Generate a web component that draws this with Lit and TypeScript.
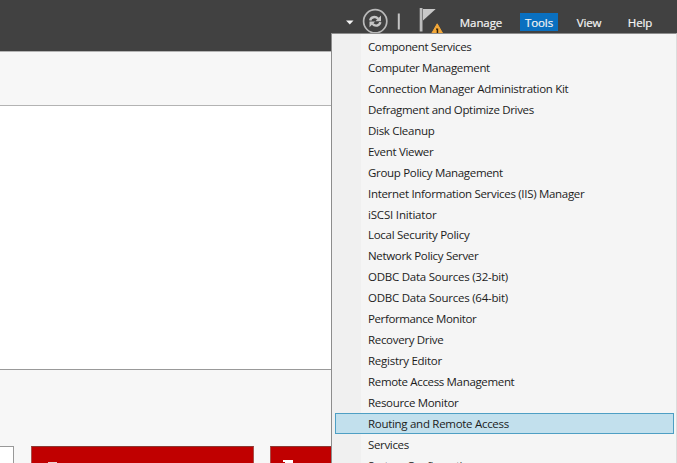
import { LitElement, html, css } from "lit";
import { customElement } from "lit/decorators.js";
import { classMap } from "lit/directives/class-map.js";

// Label and the width in pixels its text is fitted to.
const TOOLS: [string, number][] = [
  ["Component Services", 103],
  ["Computer Management", 121.5],
  ["Connection Manager Administration Kit", 200],
  ["Defragment and Optimize Drives", 165.5],
  ["Disk Cleanup", 66],
  ["Event Viewer", 65],
  ["Group Policy Management", 134.5],
  ["Internet Information Services (IIS) Manager", 216],
  ["iSCSI Initiator", 68],
  ["Local Security Policy", 101],
  ["Network Policy Server", 110],
  ["ODBC Data Sources (32-bit)", 139.5],
  ["ODBC Data Sources (64-bit)", 139.5],
  ["Performance Monitor", 108],
  ["Recovery Drive", 75],
  ["Registry Editor", 73.5],
  ["Remote Access Management", 146],
  ["Resource Monitor", 90],
  ["Routing and Remote Access", 140.5],
  ["Services", 40.5],
  ["System Configuration", 107],
];
const SELECTED = "Routing and Remote Access";

@customElement("app-root")
export class AppRoot extends LitElement {
  static styles = css`
    :host {
      display: block;
      position: relative;
      width: 677px;
      height: 463px;
      overflow: hidden;
      background: #f7f7f7;
      font: 11.5px/21px "Open Sans", "Noto Sans", sans-serif;
      color: #1c1c1c;
    }
    * { box-sizing: border-box; }
    .page { display: flex; flex-direction: column; height: 463px; }
    .bar {
      flex: none;
      height: 52px;
      background: #414141;
      border-bottom: 1px solid #b4b4b4;
      display: flex;
      align-items: flex-start;
      color: #f4f4f4;
    }
    .icons { display: block; margin-left: 340px; flex: none; }
    .nav { display: flex; padding-top: 13px; margin-left: 3px; letter-spacing: -0.1px; }
    .nav span {
      height: 18px;
      line-height: 19px;
      text-align: center;
      -webkit-text-stroke: 0.2px #f4f4f4;
    }
    .manage { width: 56px; }
    .tools { width: 38px; margin-left: 11px; background: #0a70c0; }
    .view { width: 40px; margin-left: 11px; }
    .help { width: 40px; margin-left: 11px; }
    .panel {
      flex: none;
      height: 265px;
      margin-top: 53px;
      background: #fff;
      border-top: 1px solid #b3b3b3;
      border-bottom: 1px solid #999;
    }
    .cards { display: flex; margin-top: 76px; height: 17px; }
    .card { flex: none; border: 1px solid #999; border-bottom: 0; background: #fff; }
    .plain { width: 14px; border-left: 0; }
    .red { background: #c00000; border-color: #a8504a; border-top-color: #8a3a34; }
    .wide { width: 223px; margin-left: 17px; }
    .next { width: 223px; margin-left: 16px; }
    .red svg { display: block; }
    .menu {
      position: absolute;
      left: 331px;
      top: 33px;
      width: 346px;
      height: 440px;
      padding: 2px 2px 0 3px;
      border: 1px solid #8d8d8d;
      border-right-color: #dcdcdc;
      background: linear-gradient(90deg, #f0f0f0 29px, #f5f5f5 29px);
    }
    .item {
      height: 20.95px;
      line-height: 19px;
      padding-left: 32px;
      border: 1px solid transparent;
      white-space: nowrap;
    }
    .item span { display: inline-block; }
    .on { background: #c2e0ed; border-color: #4e9fc4; }
  `;

  async firstUpdated() {
    await document.fonts.ready;
    this.renderRoot.querySelectorAll<HTMLElement>(".item span").forEach((el, i) => {
      const [text, width] = TOOLS[i];
      const gap = (width + 0.7 - el.getBoundingClientRect().width) / (text.length - 1);
      el.style.letterSpacing = `${gap}px`;
    });
  }

  render() {
    return html`
      <div class="page">
        <div class="bar">
          <svg class="icons" width="110" height="33" viewBox="340 0 110 33">
            <path d="M346 20.5h7.5l-3.75 4z" fill="#f4f4f4" />
            <circle cx="375.2" cy="21.3" r="11.6" fill="none" stroke="#b9b9b9" stroke-width="1.7" />
            <g fill="none" stroke="#c6c6c6" stroke-width="2.4">
              <path d="M370.2 20.5c.5-3.4 5-4.8 8-1.6" />
              <path d="M380.3 22.2c-.5 3.4-5 4.8-8 1.6" />
            </g>
            <path d="M381 15.5v5.7h-5.6zM369.5 27.2v-5.7h5.6z" fill="#c6c6c6" />
            <path d="M397.8 13.5h2v16h-2z" fill="#c4c4c4" />
            <path d="M419.7 8h2.8v23.5h-2.8z" fill="#bdbdbd" />
            <path d="M423 9h12.7L423 20.4z" fill="#c8c8c8" />
            <path d="M437.2 23.8l6.5 11.3h-13z" fill="#f4a838" stroke="#f4a838" stroke-linejoin="round" />
            <path d="M436 28.5h2.2V33h-1.5v-3.2H436z" fill="#33230a" />
          </svg>
          <div class="nav">
            <span class="manage">Manage</span>
            <span class="tools">Tools</span>
            <span class="view">View</span>
            <span class="help">Help</span>
          </div>
        </div>
        <div class="panel"></div>
        <div class="cards">
          <div class="card plain"></div>
          <div class="card red wide">
            <svg width="60" height="16" viewBox="32 447 60 16"><path d="M48 462h9v1h-9z" fill="#ead0d0" /></svg>
          </div>
          <div class="card red next">
            <svg width="60" height="16" viewBox="271 447 60 16"><path d="M283 460h10v3h-8v-1h-2z" fill="#fff" /></svg>
          </div>
        </div>
      </div>
      <div class="menu">
        ${TOOLS.map(
          ([text]) => html`<div class=${classMap({ item: true, on: text === SELECTED })}><span>${text}</span></div>`
        )}
      </div>
    `;
  }
}
